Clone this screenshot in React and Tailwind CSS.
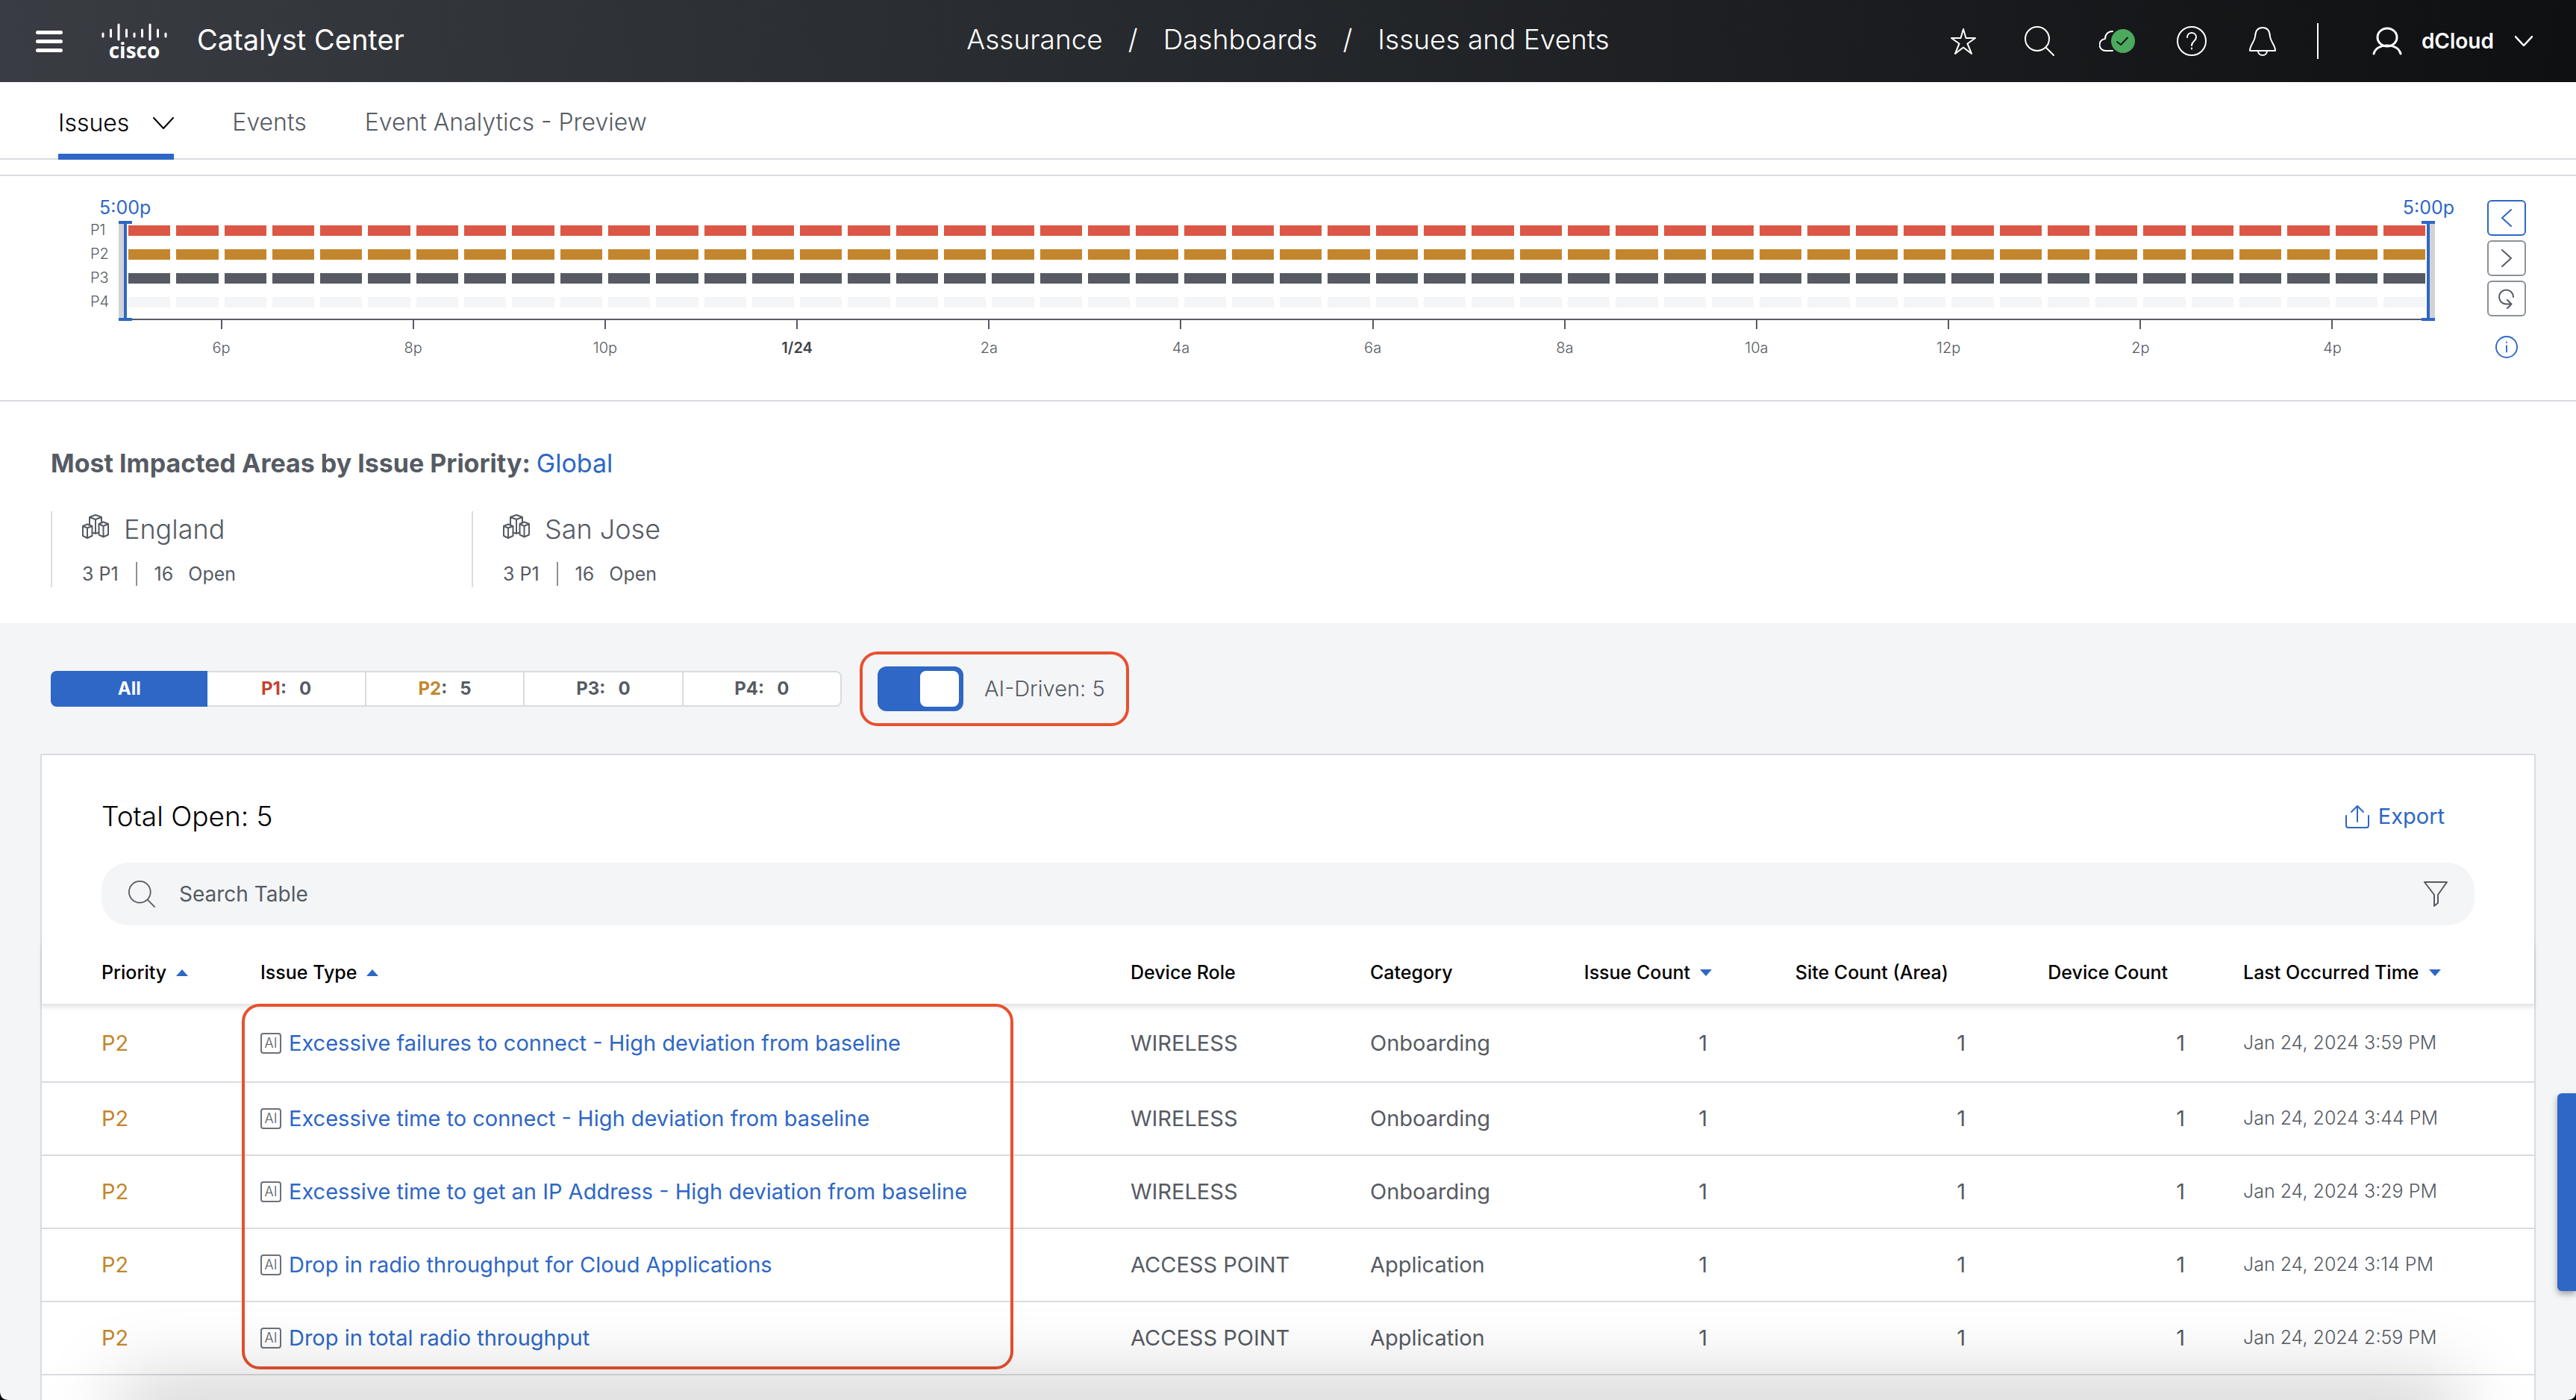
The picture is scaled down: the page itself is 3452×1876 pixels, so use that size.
import clsx from 'clsx'

const PRIORITIES = [
  { name: 'P1', bar: 'bg-[#dc5745]' },
  { name: 'P2', bar: 'bg-[#c4862d]' },
  { name: 'P3', bar: 'bg-[#565b63]' },
  { name: 'P4', bar: 'bg-[#f4f5f7]' },
]

const HOURS = ['6p', '8p', '10p', '1/24', '2a', '4a', '6a', '8a', '10a', '12p', '2p', '4p']

const FILTERS = [
  { name: 'P1', count: 0, color: 'text-[#c5432f]' },
  { name: 'P2', count: 5, color: 'text-[#c4862d]' },
  { name: 'P3', count: 0, color: 'text-[#565b63]' },
  { name: 'P4', count: 0, color: 'text-[#565b63]' },
]

const ISSUES = [
  { type: 'Excessive failures to connect - High deviation from baseline', role: 'WIRELESS', category: 'Onboarding', time: 'Jan 24, 2024 3:59 PM' },
  { type: 'Excessive time to connect - High deviation from baseline', role: 'WIRELESS', category: 'Onboarding', time: 'Jan 24, 2024 3:44 PM' },
  { type: 'Excessive time to get an IP Address - High deviation from baseline', role: 'WIRELESS', category: 'Onboarding', time: 'Jan 24, 2024 3:29 PM' },
  { type: 'Drop in radio throughput for Cloud Applications', role: 'ACCESS POINT', category: 'Application', time: 'Jan 24, 2024 3:14 PM' },
  { type: 'Drop in total radio throughput', role: 'ACCESS POINT', category: 'Application', time: 'Jan 24, 2024 2:59 PM' },
]

const Icon = ({ className, box = '0 0 40 40', width = 2, children }) => (
  <svg
    viewBox={box}
    className={className}
    fill="none"
    stroke="currentColor"
    strokeWidth={width}
    strokeLinecap="round"
    strokeLinejoin="round"
    aria-hidden="true"
  >
    {children}
  </svg>
)

const SearchIcon = ({ className }) => (
  <Icon className={className}>
    <circle cx="17" cy="17" r="16" />
    <path d="M28.500 28.500L39 39" />
  </Icon>
)

const ChevronDown = ({ className, width }) => (
  <Icon className={className} box="0 0 28 16" width={width}>
    <path d="M1 1l13 14L27 1" />
  </Icon>
)

const CiscoLogo = () => (
  <div className="flex w-[88px] flex-col items-center" role="img" aria-label="Cisco">
    <svg viewBox="0 0 88 24" className="h-6 w-full" stroke="#fff" strokeWidth="3" strokeLinecap="round">
      <path d="M2 14v4M12.500 9v9M23 2v20M33.500 9v9M44 14v4M54.500 9v9M65 2v20M75.500 9v9M86 14v4" />
    </svg>
    <span className="font-['Open_Sans',sans-serif] text-[28px] leading-6 font-bold">cisco</span>
  </div>
)

const Header = () => (
  <header className="relative flex h-[110px] items-center justify-between bg-linear-to-r from-[#393c42] via-[#24272b] to-[#0f1012] pr-[58px] pl-12 text-white">
    <div className="flex items-center">
      <button aria-label="Menu" className="flex w-9 flex-col gap-[7px]">
        <span className="h-[5px] rounded-sm bg-white" />
        <span className="h-[5px] rounded-sm bg-white" />
        <span className="h-[5px] rounded-sm bg-white" />
      </button>
      <a href="#" className="ml-[52px] flex items-center gap-10">
        <CiscoLogo />
        <span className="pb-1 text-[38px]">Catalyst Center</span>
      </a>
    </div>

    <nav aria-label="Breadcrumb" className="absolute inset-x-0 flex justify-center gap-[34px] pb-1 text-[37px] font-light">
      <a href="#">Assurance</a>
      <span>/</span>
      <a href="#">Dashboards</a>
      <span>/</span>
      <a href="#">Issues and Events</a>
    </nav>

    <div className="relative flex items-center">
      <button aria-label="Favorites">
        <Icon className="size-9" box="0 0 36 36">
          <path d="M18 2l3.500 12H34l-10.500 7.500L29 35l-11-8.500L7 35l5.500-13.500L2 14h12.500z" />
        </Icon>
      </button>
      <button aria-label="Search" className="ml-16">
        <SearchIcon className="size-10" />
      </button>
      <button aria-label="Cloud status" className="ml-[60px]">
        <Icon className="h-8 w-12" box="0 0 48 32">
          <path d="M18 29H9a8 8 0 0 1-1-16C8 7 12 3 18 3" />
          <circle cx="32" cy="16" r="16" fill="#4caa5c" stroke="none" />
          <path d="M24 17l5 4 9-9.500" stroke="#16181b" />
        </Icon>
      </button>
      <button aria-label="Help" className="ml-14">
        <Icon className="size-10">
          <circle cx="20" cy="20" r="19" />
          <path d="M14 15c0-4 3-6 6-6s6 2 6 6c0 5-6 5-6 11M20 29.500v1" />
        </Icon>
      </button>
      <button aria-label="Notifications" className="ml-14">
        <Icon className="h-10 w-[38px]" box="0 0 38 40">
          <path d="M2 33c0-8 6-11 7-19C9.500 5 13 2 19 2s9.500 3 10 12c1 8 7 11 7 19zM13 33c0 4 3 6 6 6s6-2 6-6" />
        </Icon>
      </button>
      <span className="ml-[54px] h-12 w-0.5 bg-white" />
      <button className="ml-[72px] flex items-center text-[28px] font-semibold">
        <Icon className="h-[38px] w-10" box="0 0 40 38" width={3}>
          <ellipse cx="20" cy="14" rx="13" ry="12" />
          <path d="M2 36c2-7 9-11 18-11s16 4 18 11" />
        </Icon>
        <span className="ml-[26px]">dCloud</span>
        <ChevronDown className="ml-7 h-3.5 w-6" width={3} />
      </button>
    </div>
  </header>
)

const Tabs = () => (
  <nav className="flex h-[104px] gap-[78px] border-b-2 border-[#d9dbe0] px-[78px] text-[32px] font-light text-[#565b63]">
    <a
      href="#"
      aria-current="page"
      className="relative -mb-0.5 flex items-center gap-8 pt-1.5 text-black after:absolute after:inset-x-0 after:bottom-0 after:h-2 after:bg-[#2e67c5]"
    >
      <span>Issues</span>
      <ChevronDown className="h-4 w-7" />
    </a>
    <a href="#" className="flex items-center pt-1.5">Events</a>
    <a href="#" className="flex items-center pt-1.5">Event Analytics - Preview</a>
  </nav>
)

const RangeHandle = ({ side }) => (
  <div className={clsx('absolute top-0 h-[134px] w-[18px]', side === 'left' ? 'left-0' : 'right-0')}>
    <p
      className={clsx(
        'absolute -top-[34px] text-[25px] leading-8 text-[#2e67c5]',
        side === 'left' ? '-left-[26px]' : '-right-[26px]',
      )}
    >
      5:00p
    </p>
    <div className="flex h-full flex-col">
      <span className="h-1 bg-[#2e67c5]" />
      <span className={clsx('flex flex-1', side === 'right' && 'flex-row-reverse')}>
        <span className="w-[7px] bg-[#d0d3d6]" />
        <span className="w-1 bg-[#2e67c5]" />
      </span>
      <span className="h-1 bg-[#2e67c5]" />
    </div>
  </div>
)

const Timeline = () => (
  <section className="flex border-y-2 border-[#d9dbe0] pt-[60px] pr-[67px] pb-[54px] pl-[121px]">
    <div className="flex w-[38px] flex-col text-xl leading-8 font-light text-[#565b63]">
      {PRIORITIES.map((p) => (
        <span key={p.name} className="-mt-1 mb-1">{p.name}</span>
      ))}
    </div>

    <div className="relative flex-1">
      <div className="mx-[9px] border-b-2 border-[#565b63] pt-1.5 pb-[15px]">
        <div className="mx-1 flex flex-col gap-[18px]">
          {PRIORITIES.map((p) => (
            <div key={p.name} className="flex h-3.5 gap-2">
              {Array.from({ length: 48 }, (_, i) => (
                <span key={i} className={clsx('flex-1', p.bar)} />
              ))}
            </div>
          ))}
        </div>
      </div>
      <div className="mx-[9px] flex">
        {HOURS.map((hour) => (
          <div key={hour} className="flex flex-1 flex-col items-center">
            <span className="h-3 w-0.5 bg-[#565b63]" />
            <span className={clsx('mt-[9px] text-xl leading-8', hour === '1/24' ? 'font-semibold text-[#40444b]' : 'font-light text-[#565b63]')}>
              {hour}
            </span>
          </div>
        ))}
      </div>
      <RangeHandle side="left" />
      <RangeHandle side="right" />
    </div>

    <div className="-mt-7 ml-[70px] flex w-[52px] flex-col items-center gap-1.5 text-[#565b63]">
      <button aria-label="Previous" className="flex h-12 w-full items-center justify-center rounded-md border-2 border-[#2e67c5] text-[#2e67c5]">
        <Icon className="h-6 w-4" box="0 0 16 24">
          <path d="M14 1L2 12l12 11" />
        </Icon>
      </button>
      <button aria-label="Next" className="flex h-12 w-full items-center justify-center rounded-md border-2 border-[#8c9197]">
        <Icon className="h-6 w-4" box="0 0 16 24">
          <path d="M2 1l12 11L2 23" />
        </Icon>
      </button>
      <button aria-label="Refresh" className="flex h-12 w-full items-center justify-center rounded-md border-2 border-[#8c9197]">
        <Icon className="h-7 w-6" box="0 0 24 28">
          <path d="M21 12a9.500 9.500 0 1 0-9.500 9.500H18M13 16l5.500 5.500-5.500 5.500" />
        </Icon>
      </button>
      <button aria-label="Information" className="mt-5 text-[#2e67c5]">
        <Icon className="size-[30px]" box="0 0 32 32">
          <circle cx="16" cy="16" r="15" />
          <path d="M16 14v9M16 9v.5" />
        </Icon>
      </button>
    </div>
  </section>
)

const BuildingsIcon = () => (
  <Icon className="h-[34px] w-9" box="-0.500 -0.500 36 34">
    <path d="M9.500 14V3.500l8-3 8 3V11M9.500 3.500l8 3 8-3M17.500 6.500V25M13 24l4.500 1.500L22 24" />
    <path d="M.5 15.500l6-2.500 6.500 2.500v13l-6.500 3-6-3zM.5 15.500l6 2.500 6.500-2.500M6.500 18v13.500" />
    <path d="M22 12.500l6-2.500 6.500 2.500V27l-6.500 3-6-3zM22 12.500l6 3 6.500-3M28 15.500V30" />
  </Icon>
)

const Area = ({ name }) => (
  <div className="flex h-[102px] w-[564px] flex-col justify-between border-l-2 border-[#dcdddf] pl-10 text-[#565b63]">
    <div className="flex gap-5 text-4xl leading-[48px] font-light">
      <span className="pt-1">
        <BuildingsIcon />
      </span>
      <a href="#">{name}</a>
    </div>
    <div className="flex items-center text-[25px] leading-9">
      <span>3 P1</span>
      <span className="mx-[23px] h-8 w-0.5 bg-[#8c9197]" />
      <span>16</span>
      <span className="ml-5">Open</span>
    </div>
  </div>
)

const ImpactedAreas = () => (
  <section className="px-[68px] pt-[60px] pb-12">
    <h2 className="text-[34px] leading-[46px] font-bold text-[#565b63]">
      Most Impacted Areas by Issue Priority:{' '}
      <a href="#" className="font-normal text-[#2e67c5]">Global</a>
    </h2>
    <div className="mt-[41px] flex">
      <Area name="England" />
      <Area name="San Jose" />
    </div>
  </section>
)

const Filters = () => (
  <div className="flex items-center pl-[68px]">
    <div className="flex h-12 w-[1060px] text-2xl font-bold text-[#565b63]">
      <button className="flex-1 rounded-l-lg bg-[#2e67c5] text-white">All</button>
      {FILTERS.map((f) => (
        <button key={f.name} className="flex-1 border-2 border-l-0 border-[#d9dbe0] bg-white last:rounded-r-lg">
          <span className={f.color}>{f.name}</span>:&nbsp;&nbsp; {f.count}
        </button>
      ))}
    </div>
    <label className="ml-6 flex h-[100px] items-center rounded-3xl border-4 border-[#e8502f] pr-7 pl-5 text-[29px] font-light text-[#565b63]">
      <span className="flex h-[60px] w-[115px] items-center justify-end rounded-xl bg-[#2e67c5] pr-1.5">
        <input type="checkbox" defaultChecked className="sr-only" />
        <span className="h-12 w-[52px] rounded-lg bg-white" />
      </span>
      <span className="ml-7">AI-Driven: 5</span>
    </label>
  </div>
)

const SortArrow = ({ dir }) => (
  <svg viewBox="0 0 16 9" className="h-[9px] w-4" fill="#2e67c5" aria-hidden="true">
    {dir === 'up' && <path d="M8 0l8 9H0z" />}
    {dir === 'down' && <path d="M0 0h16L8 9z" />}
  </svg>
)

const HeadCell = ({ children, dir, className, right }) => (
  <th className={clsx('p-0 font-medium', className)}>
    <button className={clsx('flex w-full items-center gap-[13px] whitespace-nowrap', right && 'justify-end')}>
      {children}
      <SortArrow dir={dir} />
    </button>
  </th>
)

const IssueTable = () => (
  <div className="relative">
    <table className="w-full table-fixed text-left text-[29px] text-[#565b63]">
      <colgroup>
        <col className="w-[293px]" />
        <col />
        <col className="w-[321px]" />
        <col className="w-[284px]" />
        <col className="w-[174px]" />
        <col className="w-[346px]" />
        <col className="w-[294px]" />
        <col className="w-[462px]" />
      </colgroup>
      <thead>
        <tr className="h-[84px] border-b-2 border-[#e6e7e9] text-[25px] text-black shadow-[0_4px_6px_rgba(0,0,0,0.1)]">
          <HeadCell dir="up" className="pl-20">Priority</HeadCell>
          <HeadCell dir="up">Issue Type</HeadCell>
          <HeadCell>Device Role</HeadCell>
          <HeadCell>Category</HeadCell>
          <HeadCell dir="down" right>Issue Count</HeadCell>
          <HeadCell right>Site Count (Area)</HeadCell>
          <HeadCell right>Device Count</HeadCell>
          <HeadCell dir="down" className="pl-[72px]">Last Occurred Time</HeadCell>
        </tr>
      </thead>
      <tbody>
        {ISSUES.map((issue) => (
          <tr key={issue.time} className="h-[98px] border-b-2 border-[#d9dbe0] first:h-[104px]">
            <td className="p-0 pl-20 text-[#c4862d]">P2</td>
            <td className="p-0">
              <div className="flex items-center gap-2.5">
                <span className="flex h-7 w-7 items-center justify-center rounded-sm border-2 border-[#6c7178] text-lg leading-none font-light">
                  AI
                </span>
                <a href="#" className="whitespace-nowrap text-[#2e67c5]">{issue.type}</a>
              </div>
            </td>
            <td className="p-0">{issue.role}</td>
            <td className="p-0">{issue.category}</td>
            <td className="p-0 pr-1.5 text-right">1</td>
            <td className="p-0 pr-1.5 text-right">1</td>
            <td className="p-0 pr-1.5 text-right">1</td>
            <td className="p-0 pl-[72px] text-[25px] font-light">{issue.time}</td>
          </tr>
        ))}
      </tbody>
    </table>
    {/* highlight around the AI issues */}
    <div className="pointer-events-none absolute top-[83px] bottom-2 left-[268px] w-[1034px] rounded-3xl border-4 border-[#e8502f]" />
  </div>
)

const IssuesCard = () => (
  <section className="mx-[54px] mt-[37px] flex-1 border-2 border-b-0 border-[#d9dbe0] bg-white">
    <div className="px-20 pt-[58px]">
      <div className="flex items-center justify-between pr-10">
        <h2 className="text-[37px] leading-[48px] font-light text-black">Total Open: 5</h2>
        <button className="flex items-center gap-3 text-[29px] text-[#2e67c5]">
          <Icon className="size-8" box="0 0 32 32">
            <path d="M1 15v13q0 3 3 3h24q3 0 3-3V15M16 23V2M8 10l8-8 8 8" />
          </Icon>
          Export
        </button>
      </div>
      <div className="mt-[38px] flex h-[84px] items-center rounded-[36px] bg-[#f4f5f7] pr-9 pl-9 text-[#565b63]">
        <SearchIcon className="size-9" />
        <input
          type="text"
          aria-label="Search Table"
          placeholder="Search Table"
          className="ml-8 flex-1 bg-transparent text-[28px] outline-none placeholder:text-[#565b63]"
        />
        <button aria-label="Filter">
          <Icon className="h-9 w-8" box="0 0 32 36">
            <path d="M1 2h30L19 19v11l-5 4V19z" />
          </Icon>
        </button>
      </div>
    </div>
    <div className="mt-[22px]">
      <IssueTable />
    </div>
  </section>
)

export default function App() {
  return (
    <div className="relative flex min-h-screen flex-col overflow-hidden bg-white font-['Inter',sans-serif]">
      <Header />
      <Tabs />
      <div className="h-5" />
      <Timeline />
      <ImpactedAreas />
      <main className="flex flex-1 flex-col bg-[#f4f5f7] pt-[38px]">
        <Filters />
        <IssuesCard />
      </main>

      <button aria-label="Feedback" className="absolute right-0 bottom-[146px] h-[265px] w-[25px] rounded-l-md bg-[#2e67c5] shadow-[0_4px_8px_rgba(0,0,0,0.35)]" />
      {/* soft shade along the window's lower edge */}
      <div className="pointer-events-none absolute inset-x-[180px] -bottom-5 h-5 shadow-[0_0_100px_20px_rgba(0,0,0,0.25)]" />
      <svg viewBox="0 0 12 12" className="absolute bottom-0 left-0 size-3" aria-hidden="true">
        <path d="M0 0q0 12 12 12H0z" />
      </svg>
      <svg viewBox="0 0 12 12" className="absolute right-0 bottom-0 size-3" aria-hidden="true">
        <path d="M12 0q0 12-12 12h12z" />
      </svg>
    </div>
  )
}
